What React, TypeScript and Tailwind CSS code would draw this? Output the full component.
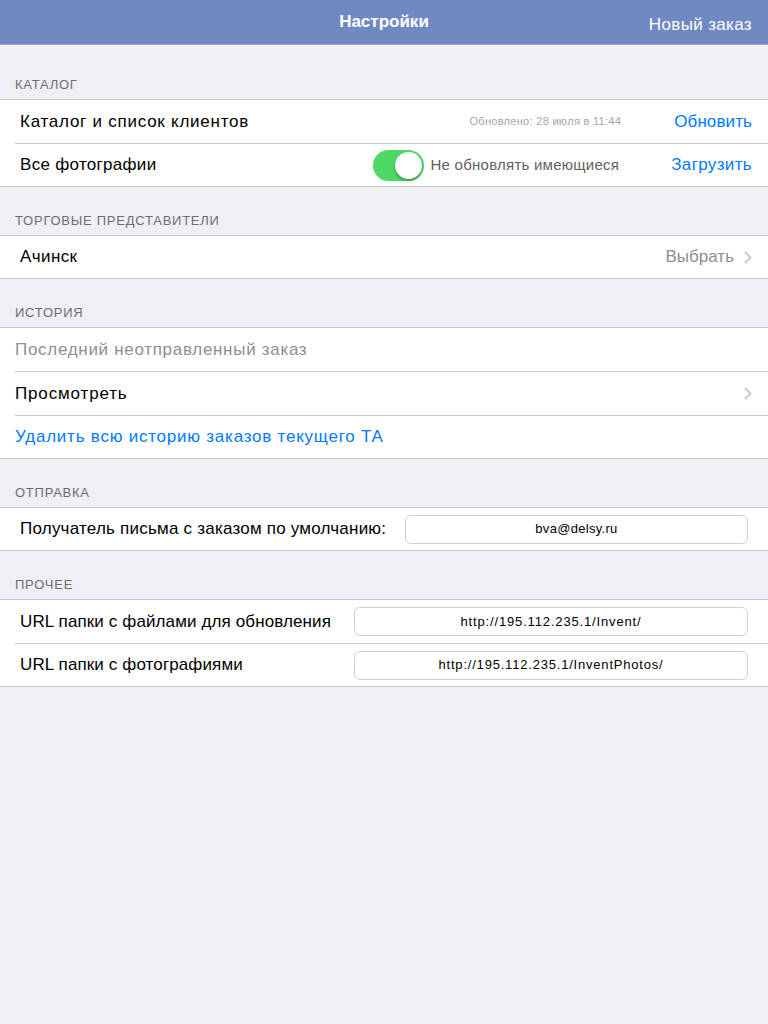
const font = { fontFamily: '"Liberation Sans", Arial, sans-serif' };

function Header({ title, first }: { title: string; first?: boolean }) {
  return (
    <div
      className={`${first ? "h-[54px]" : "h-[48px]"} flex items-end pb-[5px] px-[15px] text-[13px] tracking-[0.75px] text-[#6d6d72] uppercase`}
    >
      {title}
    </div>
  );
}

function Group({ children }: { children: React.ReactNode }) {
  return <div className="bg-white border-y border-[#c8c7cc]">{children}</div>;
}

function Row({
  children,
  last,
  flush,
}: {
  children: React.ReactNode;
  last?: boolean;
  flush?: boolean;
}) {
  return (
    <div className="pl-[15px]">
      <div
        className={`flex items-center ${flush ? "" : "pl-[5px]"} ${
          last ? "h-[42px]" : "h-[44px] border-b border-[#c8c7cc]"
        }`}
      >
        {children}
      </div>
    </div>
  );
}

function Chevron() {
  return (
    <svg width="8" height="13" viewBox="0 0 8 13" className="ml-[10px]">
      <path d="M1 1l5.5 5.5L1 12" fill="none" stroke="#c7c7cc" strokeWidth="1.8" />
    </svg>
  );
}

function Field({ value, w, track }: { value: string; w: string; track: string }) {
  return (
    <div
      className={`${w} h-[29px] ml-auto mr-[20px] border border-[#cfcfd3] rounded-[6px] flex items-center justify-center text-[13px] text-black ${track}`}
    >
      {value}
    </div>
  );
}

export default function App() {
  return (
    <div className="w-[768px] h-[1024px] bg-[#efeff4]" style={font}>
      {/* навбар */}
      <div className="h-[45px] bg-[#7189c3] border-b border-[#a3a9b8] relative flex items-center justify-center">
        <span className="text-white text-[17px] font-bold">Настройки</span>
        <span className="absolute right-[16px] top-[12px] text-white text-[17px] tracking-[0.35px]">
          Новый заказ
        </span>
      </div>

      {/* каталог */}
      <Header title="Каталог" first />
      <Group>
        <Row>
          <span className="text-[17px] tracking-[0.75px] text-black">Каталог и список клиентов</span>
          <span className="ml-auto text-[11px] tracking-[0.3px] text-[#a4a4a8]">Обновлено: 28 июля в 11:44</span>
          <span className="ml-[53px] mr-[16px] text-[17px] tracking-[0.1px] text-[#007aff]">Обновить</span>
        </Row>
        <Row last>
          <span className="text-[17px] tracking-[0.3px] text-black">Все фотографии</span>
          <div className="ml-auto w-[51px] h-[31px] rounded-full bg-[#4cd964] relative">
            <div className="absolute right-[2px] top-[2px] w-[27px] h-[27px] rounded-full bg-white shadow-[0_2px_3px_rgba(0,0,0,0.3)]" />
          </div>
          <span className="ml-[6px] text-[15px] tracking-[0.25px] text-[#5f5f63]">Не обновлять имеющиеся</span>
          <span className="ml-[52px] mr-[16px] text-[17px] tracking-[0.35px] text-[#007aff]">Загрузить</span>
        </Row>
      </Group>

      {/* торговые представители */}
      <Header title="Торговые представители" />
      <Group>
        <Row last>
          <span className="text-[17px] tracking-[0.4px] text-black">Ачинск</span>
          <span className="ml-auto text-[17px] text-[#8e8e93]">Выбрать</span>
          <div className="mr-[16px]">
            <Chevron />
          </div>
        </Row>
      </Group>

      {/* история */}
      <Header title="История" />
      <Group>
        <Row flush>
          <span className="text-[17px] tracking-[0.7px] text-[#8e8e93]">Последний неотправленный заказ</span>
        </Row>
        <Row flush>
          <span className="text-[17px] tracking-[0.85px] text-black">Просмотреть</span>
          <span className="ml-auto" />
          <div className="mr-[16px]">
            <Chevron />
          </div>
        </Row>
        <Row flush last>
          <span className="text-[17px] tracking-[0.77px] text-[#007aff]">
            Удалить всю историю заказов текущего ТА
          </span>
        </Row>
      </Group>

      {/* отправка */}
      <Header title="Отправка" />
      <Group>
        <Row last>
          <span className="text-[17px] tracking-[0.22px] text-black">Получатель письма с заказом по умолчанию:</span>
          <Field value="bva@delsy.ru" w="w-[343px]" track="tracking-[0.3px]" />
        </Row>
      </Group>

      {/* прочее */}
      <Header title="Прочее" />
      <Group>
        <Row>
          <span className="text-[17px] tracking-[0.12px] text-black">URL папки с файлами для обновления</span>
          <Field value="http://195.112.235.1/Invent/" w="w-[394px]" track="tracking-[0.85px]" />
        </Row>
        <Row last>
          <span className="text-[17px] tracking-[0.12px] text-black">URL папки с фотографиями</span>
          <Field value="http://195.112.235.1/InventPhotos/" w="w-[394px]" track="tracking-[0.8px]" />
        </Row>
      </Group>
    </div>
  );
}
